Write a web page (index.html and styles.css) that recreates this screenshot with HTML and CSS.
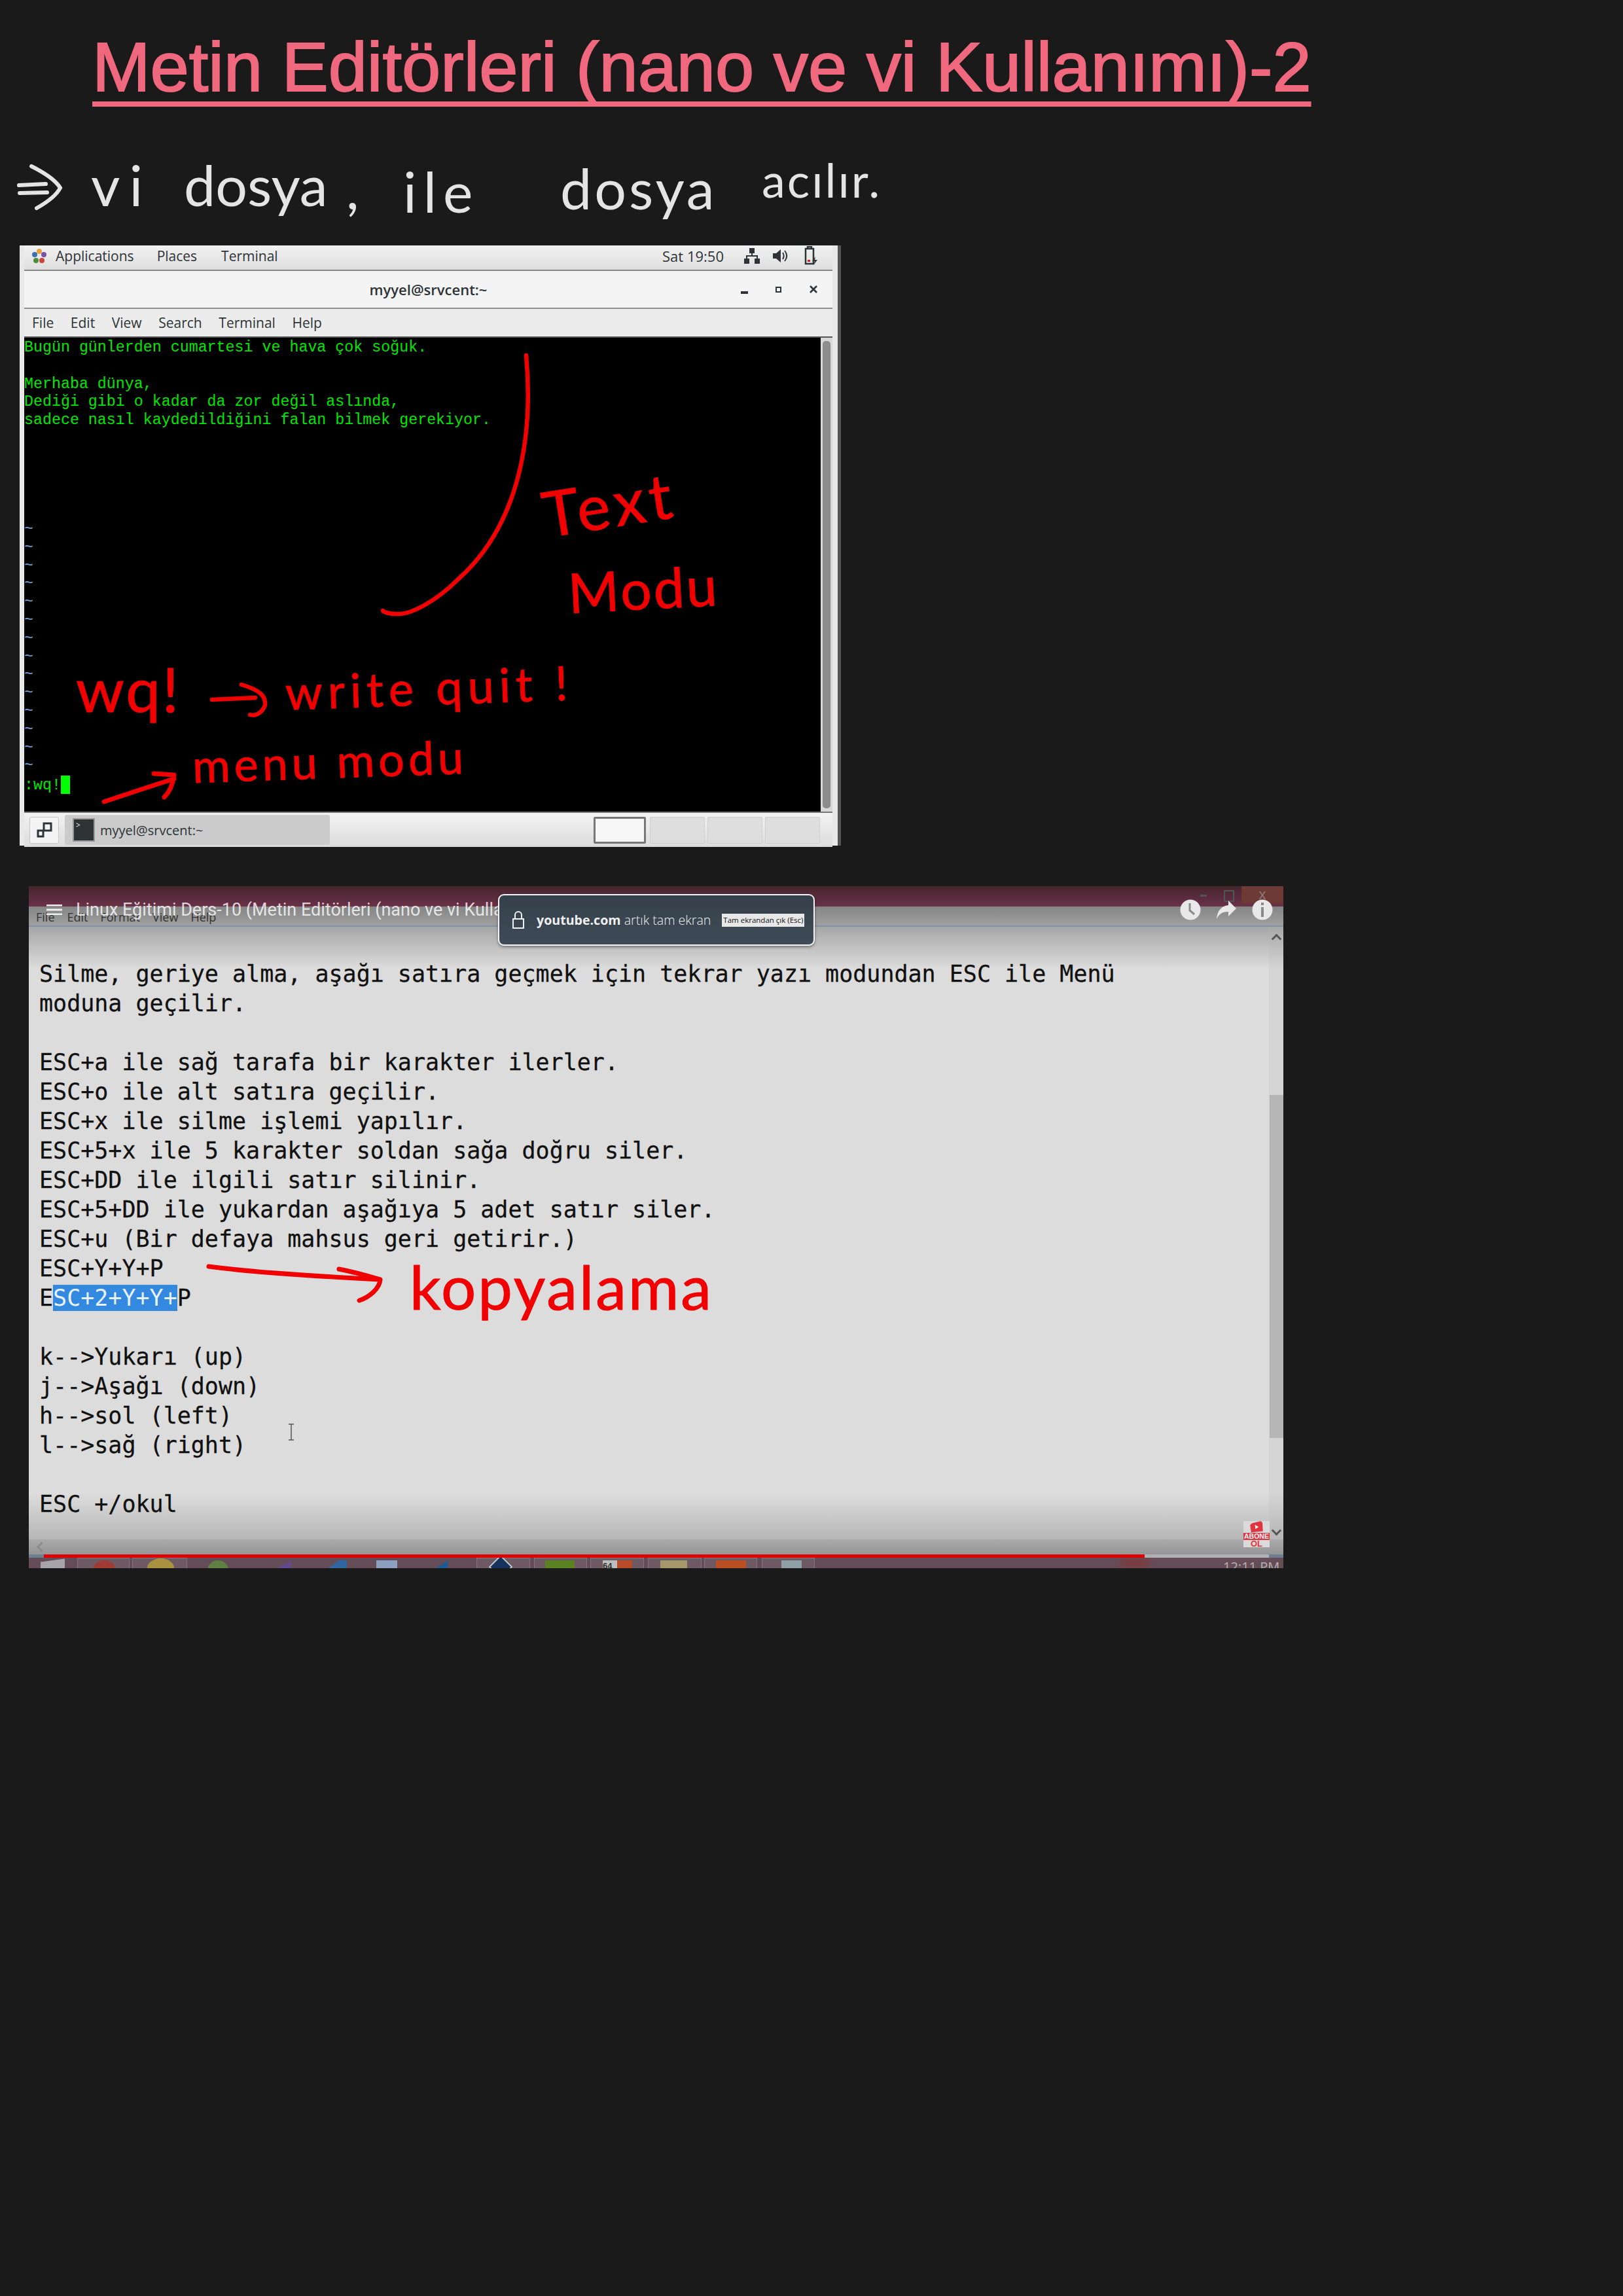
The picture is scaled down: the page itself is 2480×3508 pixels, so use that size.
FILE: index.html
```html
<!DOCTYPE html>
<html lang="tr">
<head>
    <meta charset="UTF-8">
    <title>Metin Editörleri (nano ve vi Kullanımı)-2</title>
    <link rel="stylesheet" href="styles.css">
</head>
<body>

    <header class="page-title">
        <h1>Metin Editörleri (nano ve vi Kullanımı)-2</h1>
    </header>

    <!-- handwritten line under the title -->
    <div class="note-line">
        <svg class="note-arrow" width="76" height="70" viewBox="0 0 76 70">
            <path d="M3 32 L44 30 M4 44 L46 43 M22 3 C44 14 60 26 66 36 C60 48 46 58 30 67" fill="none" stroke="#e4e4e4" stroke-width="6" stroke-linecap="round"/>
        </svg>
        <span class="note-word word-vi">vi</span>
        <span class="note-word word-dosya">dosya</span>
        <span class="note-word word-comma">,</span>
        <span class="note-word word-ile">ile</span>
        <span class="note-word word-dosya2">dosya</span>
        <span class="note-word word-acilir">acılır.</span>
    </div>

    <!-- first screenshot: gnome terminal -->
    <section class="desktop">
        <div class="panel">
            <div class="panel-left">
                <svg width="26" height="26" viewBox="0 0 26 26">
                    <circle cx="13" cy="6" r="4" fill="#e8a33a"/>
                    <circle cx="20" cy="11" r="4" fill="#7a4fa8"/>
                    <circle cx="17" cy="20" r="4" fill="#c9463d"/>
                    <circle cx="8" cy="20" r="4" fill="#4b8f3a"/>
                    <circle cx="6" cy="11" r="4" fill="#3c6fb5"/>
                </svg>
                <span class="panel-apps">Applications</span>
                <span class="panel-places">Places</span>
                <span class="panel-term">Terminal</span>
            </div>
            <div class="panel-right">
                <span class="panel-clock">Sat 19:50</span>
                <svg class="icon-net" width="24" height="26" viewBox="0 0 24 26">
                    <path d="M8 1h8v8H8zM0 17h8v8H0zM16 17h8v8h-8z" fill="#2e3436"/>
                    <path d="M12 9v4M4 17v-4h16v4" fill="none" stroke="#2e3436" stroke-width="2"/>
                </svg>
                <svg class="icon-vol" width="26" height="26" viewBox="0 0 26 26">
                    <path d="M2 9h5l7-6v20l-7-6H2z" fill="#2e3436"/>
                    <path d="M17 8c2 3 2 7 0 10M20 5c4 5 4 11 0 16" fill="none" stroke="#2e3436" stroke-width="2"/>
                </svg>
                <svg class="icon-bat" width="24" height="30" viewBox="0 0 24 30">
                    <path d="M4 4h12v23H4zM7 4V1h6v3" fill="none" stroke="#2e3436" stroke-width="2.5"/>
                    <path d="M7 21h4v3H7z" fill="#d02020"/>
                    <path d="M19 16l-5 7h4l-2 6 6-8h-4z" fill="#2e3436"/>
                </svg>
            </div>
        </div>

        <div class="titlebar">
            <span class="titlebar-name">myyel@srvcent:~</span>
            <div class="titlebar-btns">
                <span class="btn-min"></span>
                <span class="btn-max"></span>
                <svg width="14" height="14" viewBox="0 0 14 14">
                    <path d="M2 2l10 10M12 2L2 12" stroke="#2e3436" stroke-width="2.6"/>
                </svg>
            </div>
        </div>

        <nav class="menubar">
            <a>File</a>
            <a>Edit</a>
            <a>View</a>
            <a>Search</a>
            <a>Terminal</a>
            <a>Help</a>
        </nav>

        <div class="term-row">
            <pre class="term">Bugün günlerden cumartesi ve hava çok soğuk.

Merhaba dünya,
Dediği gibi o kadar da zor değil aslında,
sadece nasıl kaydedildiğini falan bilmek gerekiyor.





<span class="tilde">~
~
~
~
~
~
~
~
~
~
~
~
~
~</span>
:wq!<span class="cursor"></span></pre>
            <div class="term-scroll"><div class="term-thumb"></div></div>
        </div>

        <div class="taskbar">
            <div class="show-desktop">
                <svg width="24" height="24" viewBox="0 0 24 24">
                    <path d="M11 2h11v11H11z" fill="none" stroke="#2e3436" stroke-width="3"/>
                    <path d="M2 13h8v9H2z" fill="none" stroke="#2e3436" stroke-width="3"/>
                </svg>
            </div>
            <div class="task-btn">
                <span class="task-icon">&gt;</span>
                <span>myyel@srvcent:~</span>
            </div>
            <div class="workspaces">
                <span class="ws ws-active"></span>
                <span class="ws"></span>
                <span class="ws"></span>
                <span class="ws"></span>
            </div>
        </div>

        <!-- red ink on top of the terminal -->
        <svg class="ink-layer" width="1250" height="917" viewBox="0 0 1250 917">
            <g fill="none" stroke="#f00000" stroke-width="6.5" stroke-linecap="round" stroke-linejoin="round">
                <path d="M774 168 C786 300 760 430 670 510 C640 540 600 565 575 563 C565 563 555 560 555 558"/>
                <path d="M294 694 L360 691 M339 671 C370 680 376 690 375 702 C372 712 362 720 352 717"/>
                <path d="M129 850 C165 838 200 826 236 815 M205 807 L236 809 C234 825 228 836 221 843" stroke-width="7"/>
            </g>
        </svg>
        <span class="ink ink-text">Text</span>
        <span class="ink ink-mod">Modu</span>
        <span class="ink ink-wq">wq!</span>
        <span class="ink ink-write">write quit !</span>
        <span class="ink ink-menu">menu modu</span>
    </section>

    <!-- second screenshot: youtube video of notepad -->
    <section class="video">
        <div class="win-top">
            <span class="win-min"></span>
            <span class="win-max"></span>
            <span class="win-close">x</span>
        </div>
        <div class="win-menu">
            <span>File</span><span>Edit</span><span>Format</span><span>View</span><span>Help</span>
        </div>

        <div class="doc-row">
            <pre class="doc">Silme, geriye alma, aşağı satıra geçmek için tekrar yazı modundan ESC ile Menü
moduna geçilir.

ESC+a ile sağ tarafa bir karakter ilerler.
ESC+o ile alt satıra geçilir.
ESC+x ile silme işlemi yapılır.
ESC+5+x ile 5 karakter soldan sağa doğru siler.
ESC+DD ile ilgili satır silinir.
ESC+5+DD ile yukardan aşağıya 5 adet satır siler.
ESC+u (Bir defaya mahsus geri getirir.)
ESC+Y+Y+P
E<span class="picked">SC+2+Y+Y+</span>P

k--&gt;Yukarı (up)
j--&gt;Aşağı (down)
h--&gt;sol (left)
l--&gt;sağ (right)

ESC +/okul</pre>
            <div class="doc-scroll">
                <span class="arrow-up"></span>
                <div class="doc-thumb"></div>
                <span class="arrow-down"></span>
            </div>
        </div>

        <div class="h-scroll"><span class="arrow-left"></span></div>

        <div class="progress">
            <div class="progress-played"></div>
            <div class="progress-rest"></div>
        </div>

        <div class="win-taskbar">
            <span class="cell cell-1"></span>
            <span class="cell cell-2"></span>
            <span class="cell cell-3"></span>
            <span class="cell cell-4"></span>
            <span class="cell cell-5"></span>
            <span class="cell cell-6"></span>
            <span class="cell cell-7"></span>
            <span class="cell cell-8"></span>
            <span class="tb tb-win"></span>
            <span class="tb tb-red"></span>
            <span class="tb tb-yellow"></span>
            <span class="tb tb-green"></span>
            <span class="tb tb-purple"></span>
            <span class="tb tb-blue"></span>
            <span class="tb tb-sky"></span>
            <span class="tb tb-navy"></span>
            <span class="tb tb-diamond"></span>
            <span class="tb tb-lime"></span>
            <span class="tb tb-cal">64</span>
            <span class="tb tb-folder"></span>
            <span class="tb tb-orange"></span>
            <span class="tb tb-note"></span>
            <span class="tb-glow"></span>
            <span class="tb-time">12:11 PM</span>
        </div>

        <!-- youtube overlay -->
        <div class="yt-bar">
            <svg class="yt-menu" width="24" height="16" viewBox="0 0 24 16">
                <path d="M0 1h24M0 8h24M0 15h24" stroke="#f0f0f0" stroke-width="3"/>
            </svg>
            <span class="yt-title">Linux Eğitimi Ders-10 (Metin Editörleri (nano ve vi Kullanımı))</span>
            <div class="yt-icons">
                <svg width="32" height="32" viewBox="0 0 32 32">
                    <circle cx="16" cy="16" r="15.5" fill="#e8e8e8"/>
                    <path d="M15 6v11l7 6" fill="none" stroke="#8a8a8a" stroke-width="3"/>
                </svg>
                <svg width="32" height="32" viewBox="0 0 32 32">
                    <path d="M19 2l12 12-12 12v-7C10 19 5 22 1 30 2 18 8 10 19 9z" fill="#e8e8e8"/>
                </svg>
                <svg width="32" height="32" viewBox="0 0 32 32">
                    <circle cx="16" cy="16" r="15.5" fill="#e8e8e8"/>
                    <path d="M14 5h4v4h-4zM14 12h4v15h-4z" fill="#8a8a8a"/>
                </svg>
            </div>
        </div>

        <div class="toast">
            <svg width="20" height="30" viewBox="0 0 20 30">
                <path d="M5 13V7a5 5 0 0 1 10 0v6M2 13h16v14H2z" fill="none" stroke="#f0f0f0" stroke-width="2"/>
            </svg>
            <span class="toast-text"><b>youtube.com</b> artık tam ekran</span>
            <span class="toast-btn">Tam ekrandan çık (Esc)</span>
        </div>

        <svg class="ibeam" width="12" height="26" viewBox="0 0 12 26">
            <path d="M2 1h8M6 1v24M2 25h8" fill="none" stroke="#555" stroke-width="1.5"/>
        </svg>

        <div class="abone">
            <svg width="26" height="22" viewBox="0 0 26 22">
                <path d="M5 4l16-4 3 3 1 16-22 2-2-14z" fill="#e0353f"/>
                <path d="M10 7l7 4-6 4z" fill="#f4f4f4"/>
            </svg>
            <span class="abone-top">ABONE</span>
            <span class="abone-ol">OL</span>
        </div>

        <svg class="ink-layer" width="1917" height="1042" viewBox="0 0 1917 1042">
            <path d="M275 581 C340 590 440 596 537 601 M474 585 C500 590 520 596 537 601 C536 615 520 628 505 633" fill="none" stroke="#f00000" stroke-width="7" stroke-linecap="round" stroke-linejoin="round"/>
        </svg>
        <span class="ink ink-kopya">kopyalama</span>
    </section>

</body>
</html>
```

FILE: styles.css
```css
html, body {
    margin: 0;
    padding: 0;
    background-color: #1a1a1a;
}
body {
    height: 3508px;
    overflow: hidden;
}
pre {
    margin: 0;
}

/* title */
.page-title {
    height: 175px;
    padding-left: 141px;
    box-sizing: border-box;
}
.page-title h1 {
    margin: 0;
    padding-top: 42px;
    font-family: "Liberation Sans", Arial, sans-serif;
    font-size: 106.4px;
    line-height: 121px;
    font-weight: normal;
    color: #f0687e;
    white-space: nowrap;
    -webkit-text-stroke: 2px #f0687e;
    text-decoration: underline;
    text-decoration-thickness: 8px;
    text-underline-offset: 16px;
    text-decoration-skip-ink: none;
}

/* handwritten line */
.note-line {
    height: 200px;
    display: flex;
    align-items: flex-start;
    font-family: Lato, sans-serif;
    color: #e4e4e4;
}
.note-arrow {
    margin: 76px 0 0 26px;
    flex: none;
}
.note-word {
    flex: none;
    font-size: 86px;
    line-height: 80px;
    white-space: nowrap;
}
.word-vi {
    width: 58px;
    margin: 67px 0 0 37px;
    letter-spacing: 14px;
}
.word-dosya {
    width: 208px;
    margin: 67px 0 0 84px;
}
.word-comma {
    width: 20px;
    margin: 72px 0 0 40px;
}
.word-ile {
    width: 107px;
    margin: 77px 0 0 67px;
    letter-spacing: 10px;
}
.word-dosya2 {
    width: 227px;
    margin: 72px 0 0 133px;
    letter-spacing: 4px;
}
.word-acilir {
    width: 174px;
    margin: 59px 0 0 81px;
    font-size: 72px;
    letter-spacing: 3px;
}

/* terminal screenshot */
.desktop {
    position: relative;
    width: 1250px;
    height: 917px;
    margin-left: 30px;
    background-color: #e8e8e8;
    border-right: 5px solid #555;
    font-family: "Open Sans", sans-serif;
    font-size: 21px;
    color: #2e3436;
}
.panel {
    height: 32px;
    margin: 0 8px 0 7px;
    padding-bottom: 5px;
    display: flex;
    justify-content: space-between;
    align-items: center;
    background: linear-gradient(#f2f2f2, #dedede);
    border-bottom: 2px solid #8a8a8a;
}
.panel-left {
    display: flex;
    align-items: center;
    padding-left: 10px;
}
.panel-apps {
    margin-left: 12px;
}
.panel-places {
    margin-left: 35px;
}
.panel-term {
    margin-left: 37px;
}
.panel-right {
    display: flex;
    align-items: center;
    padding-right: 21px;
}
.panel-clock {
    font-size: 22px;
}
.icon-net {
    margin-left: 31px;
}
.icon-vol {
    margin-left: 18px;
}
.icon-bat {
    margin-left: 22px;
}
.titlebar {
    height: 56px;
    margin: 0 8px 0 7px;
    position: relative;
    display: flex;
    align-items: center;
    justify-content: center;
    background-color: #f4f4f4;
    border-bottom: 2px solid #909090;
    font-size: 22px;
    font-weight: 600;
}
.titlebar-btns {
    position: absolute;
    right: 22px;
    top: 21px;
    display: flex;
    align-items: center;
    gap: 42px;
}
.btn-min {
    width: 11px;
    height: 4px;
    margin-top: 10px;
    background-color: #2e3436;
}
.btn-max {
    width: 9px;
    height: 9px;
    border: 2px solid #2e3436;
    box-sizing: border-box;
}
.menubar {
    height: 42px;
    margin: 0 8px 0 7px;
    display: flex;
    align-items: center;
    padding-left: 12px;
    gap: 25.6px;
    background-color: #ececec;
    border-bottom: 2px solid #555;
}
.term-row {
    height: 724px;
    margin: 0 8px 0 7px;
    display: flex;
}
.term {
    flex: 1;
    background-color: #000;
    padding-top: 2px;
    font-family: "Liberation Mono", monospace;
    font-size: 23.3px;
    line-height: 27.8px;
    color: #00e800;
    box-sizing: border-box;
}
.tilde {
    color: #6f9fd0;
}
.cursor {
    display: inline-block;
    width: 14px;
    height: 28px;
    vertical-align: -7px;
    background-color: #00ff00;
}
.term-scroll {
    width: 18px;
    padding: 5px 3px;
    box-sizing: border-box;
    background-color: #d8d8d8;
}
.term-thumb {
    height: 100%;
    background-color: #8d8d8d;
    border-radius: 5px;
}
.taskbar {
    height: 54px;
    margin: 0 8px 0 7px;
    display: flex;
    align-items: center;
    padding-left: 8px;
    background: linear-gradient(#f2f2f2, #dcdcdc);
    border-top: 2px solid #777;
    box-sizing: border-box;
    font-size: 20px;
}
.show-desktop {
    width: 45px;
    height: 41px;
    display: flex;
    align-items: center;
    justify-content: center;
    background-color: #f4f4f4;
    border: 1px solid #c4c4c4;
    border-radius: 3px;
    box-sizing: border-box;
}
.task-btn {
    width: 405px;
    height: 46px;
    margin-left: 9px;
    display: flex;
    align-items: center;
    gap: 8px;
    padding-left: 12px;
    background-color: #cbcbcb;
    border-radius: 3px;
    box-sizing: border-box;
}
.task-icon {
    width: 34px;
    height: 36px;
    background-color: #2e3436;
    border: 2px solid #999;
    box-sizing: border-box;
    color: #eee;
    font-size: 12px;
    line-height: 18px;
    padding-left: 3px;
}
.workspaces {
    display: flex;
    margin-left: 403px;
    gap: 4px;
}
.ws {
    width: 84px;
    height: 41px;
    background-color: #dedede;
    border: 1px solid #d0d0d0;
    border-radius: 2px;
    box-sizing: border-box;
}
.ws-active {
    width: 80px;
    margin-right: 2px;
    background-color: #f6f6f6;
    border: 3px solid #777;
}

/* ink on top of the screenshots */
.ink-layer {
    position: absolute;
    left: 0;
    top: 0;
    pointer-events: none;
}
.ink {
    position: absolute;
    font-family: Lato, sans-serif;
    color: #f00000;
    white-space: nowrap;
    line-height: 1;
    -webkit-text-stroke: 1px #f00000;
}
.ink-text {
    left: 798px;
    top: 346px;
    font-size: 96px;
    letter-spacing: 7px;
    transform: rotate(-9deg);
}
.ink-mod {
    left: 838px;
    top: 482px;
    font-size: 84px;
    letter-spacing: 3px;
    transform: rotate(-3deg);
}
.ink-wq {
    left: 86px;
    top: 630px;
    font-size: 94px;
    letter-spacing: 3px;
}
.ink-write {
    left: 406px;
    top: 638px;
    font-size: 72px;
    letter-spacing: 8px;
    transform: rotate(-2deg);
}
.ink-menu {
    left: 264px;
    top: 752px;
    font-size: 70px;
    letter-spacing: 6px;
    transform: rotate(-2deg);
}
.ink-kopya {
    left: 582px;
    top: 564px;
    font-size: 94px;
    letter-spacing: 3px;
}

/* video screenshot */
.video {
    position: relative;
    width: 1917px;
    height: 1042px;
    margin: 62px 0 0 44px;
    background-color: #dcdcdc;
    overflow: hidden;
}
.win-top {
    height: 31px;
    position: relative;
    background: linear-gradient(#45262f, #6a3148);
}
.win-min {
    position: absolute;
    left: 1790px;
    top: 13px;
    width: 10px;
    height: 3px;
    background-color: #555;
}
.win-max {
    position: absolute;
    left: 1826px;
    top: 6px;
    width: 12px;
    height: 14px;
    border: 2px solid #555;
}
.win-close {
    position: absolute;
    left: 1853px;
    top: 0;
    width: 64px;
    height: 26px;
    background-color: #6e3a36;
    color: #8d7777;
    text-align: center;
    font: 22px/26px "Liberation Sans", sans-serif;
}
.win-menu {
    height: 29px;
    padding-left: 11px;
    display: flex;
    gap: 19px;
    background: linear-gradient(#858585, #a0a0a0);
    border-bottom: 2px solid #7f92a8;
    font: 18px/33px "Open Sans", sans-serif;
    color: #333;
}
.doc-row {
    height: 936px;
    display: flex;
}
.doc {
    flex: 1;
    padding: 50px 0 0 16px;
    background: linear-gradient(#a6a6a6 0, #dcdcdc 64px, #dcdcdc calc(100% - 70px), #b6b6b6 100%);
    font-family: "DejaVu Sans Mono", monospace;
    font-size: 35px;
    line-height: 45px;
    color: #111;
    -webkit-text-stroke: 0.3px #111;
    box-sizing: border-box;
}
.picked {
    background-color: #3388e0;
    color: #e8f2ff;
    -webkit-text-stroke: 0;
}
.doc-scroll {
    position: relative;
    width: 22px;
    background: linear-gradient(#a8a8a8 0, #d4d4d4 64px, #d4d4d4 calc(100% - 70px), #b6b6b6 100%);
}
.doc-thumb {
    position: absolute;
    left: 1px;
    right: 0;
    top: 257px;
    height: 524px;
    background-color: #b5b5b5;
}
.arrow-up, .arrow-down, .arrow-left {
    position: absolute;
    width: 8px;
    height: 8px;
    border-left: 3px solid #555;
    border-top: 3px solid #555;
}
.arrow-up {
    left: 6px;
    top: 13px;
    transform: rotate(45deg);
}
.arrow-down {
    left: 6px;
    top: 917px;
    transform: rotate(225deg);
}
.h-scroll {
    height: 23px;
    position: relative;
    background: linear-gradient(#aaaaaa, #959595);
}
.arrow-left {
    left: 14px;
    top: 6px;
    border-color: #8c8c8c;
    transform: rotate(-45deg);
}
.progress {
    height: 5px;
    display: flex;
    padding-left: 23px;
    background-color: #6f7f92;
}
.progress-played {
    width: 1682px;
    background-color: #e00000;
}
.progress-rest {
    width: 190px;
    background-color: #aeb0b4;
}
.win-taskbar {
    height: 16px;
    position: relative;
    overflow: hidden;
    background-color: #654d57;
    color: #b9aeb2;
}
.cell {
    position: absolute;
    top: 0;
    height: 16px;
    background-color: rgba(255, 255, 255, 0.07);
    border: 1px solid rgba(255, 255, 255, 0.16);
    border-bottom: none;
    box-sizing: border-box;
}
.cell-1 { left: 74px; width: 80px; }
.cell-2 { left: 158px; width: 84px; }
.cell-3 { left: 684px; width: 82px; }
.cell-4 { left: 772px; width: 81px; }
.cell-5 { left: 858px; width: 82px; }
.cell-6 { left: 946px; width: 82px; }
.cell-7 { left: 1032px; width: 81px; }
.cell-8 { left: 1120px; width: 81px; }
.tb {
    position: absolute;
    top: 4px;
    height: 30px;
}
.tb-win {
    left: 18px;
    width: 37px;
    background-color: #a9a4a7;
    transform: skewY(-8deg);
}
.tb-red {
    left: 98px;
    width: 35px;
    background-color: #a03a32;
    border-radius: 50%;
}
.tb-yellow {
    left: 181px;
    width: 41px;
    top: 1px;
    background-color: #a8923f;
    border-radius: 50%;
}
.tb-green {
    left: 273px;
    width: 32px;
    background-color: #5e8040;
    border-radius: 50%;
}
.tb-purple {
    left: 369px;
    width: 32px;
    background-color: #62498f;
    clip-path: polygon(0 60%, 100% 0, 100% 100%, 0 100%);
}
.tb-blue {
    left: 445px;
    width: 41px;
    background-color: #2f669f;
    clip-path: polygon(0 70%, 70% 0, 100% 0, 100% 100%, 0 100%);
}
.tb-sky {
    left: 531px;
    width: 32px;
    background-color: #8ea0c0;
}
.tb-navy {
    left: 617px;
    width: 39px;
    background-color: #1f5a94;
    clip-path: polygon(0 50%, 60% 0, 60% 100%, 0 100%);
}
.tb-diamond {
    left: 708px;
    width: 26px;
    height: 26px;
    top: 1px;
    background-color: #14325c;
    border: 2px solid #c8c8c8;
    box-sizing: border-box;
    transform: rotate(45deg);
}
.tb-lime {
    left: 789px;
    width: 45px;
    background-color: #5a8220;
}
.tb-cal {
    left: 877px;
    width: 45px;
    background: linear-gradient(90deg, #bdbdbd 50%, #b84a2a 50%);
    font: bold 13px/18px "Liberation Sans", sans-serif;
    color: #333;
}
.tb-folder {
    left: 965px;
    width: 41px;
    background-color: #a4986a;
}
.tb-orange {
    left: 1050px;
    width: 46px;
    background-color: #b94f22;
}
.tb-note {
    left: 1150px;
    width: 31px;
    background-color: #8ea0a6;
}
.tb-glow {
    position: absolute;
    left: 1668px;
    top: 0;
    width: 44px;
    height: 16px;
    background-color: #7d3b3e;
    filter: blur(6px);
}
.tb-time {
    position: absolute;
    left: 1825px;
    top: 2px;
    font: 20px/24px "Open Sans", sans-serif;
}

/* youtube overlay */
.yt-bar {
    position: absolute;
    left: 27px;
    right: 16px;
    top: 20px;
    height: 32px;
    display: flex;
    align-items: center;
}
.yt-title {
    margin-left: 21px;
    font-family: Roboto, sans-serif;
    font-size: 27px;
    color: rgba(255, 255, 255, 0.78);
    white-space: nowrap;
}
.yt-icons {
    margin-left: auto;
    display: flex;
    gap: 23px;
}
.toast {
    position: absolute;
    left: 717px;
    top: 12px;
    width: 484px;
    height: 79px;
    padding-left: 19px;
    display: flex;
    align-items: center;
    background: linear-gradient(#35404a, #3e4b56);
    border: 2px solid #f4f4f4;
    border-radius: 9px;
    box-shadow: 0 2px 4px rgba(0, 0, 0, 0.4);
    box-sizing: border-box;
    color: #f0f0f0;
    font-family: "Open Sans", sans-serif;
}
.toast-text {
    margin-left: 18px;
    font-size: 19.6px;
    font-weight: 300;
    white-space: nowrap;
}
.toast-text b {
    font-weight: 700;
}
.toast-btn {
    margin-left: 17px;
    padding: 0 2px;
    height: 20px;
    background-color: #e8e8e8;
    color: #111;
    font-size: 11.5px;
    line-height: 20px;
    white-space: nowrap;
}
.ibeam {
    position: absolute;
    left: 395px;
    top: 821px;
}
.abone {
    position: absolute;
    left: 1856px;
    top: 970px;
    width: 40px;
    height: 40px;
    background-color: #dadada;
    display: flex;
    flex-direction: column;
    align-items: center;
    font-family: "Liberation Sans", sans-serif;
    font-weight: bold;
    color: #f4f4f4;
}
.abone svg {
    width: 22px;
    height: 18px;
}
.abone-top {
    font-size: 10.5px;
    line-height: 11px;
    background-color: #e0353f;
    padding: 0 1px;
}
.abone-ol {
    font-size: 13px;
    line-height: 11px;
    color: #e0353f;
}
```
